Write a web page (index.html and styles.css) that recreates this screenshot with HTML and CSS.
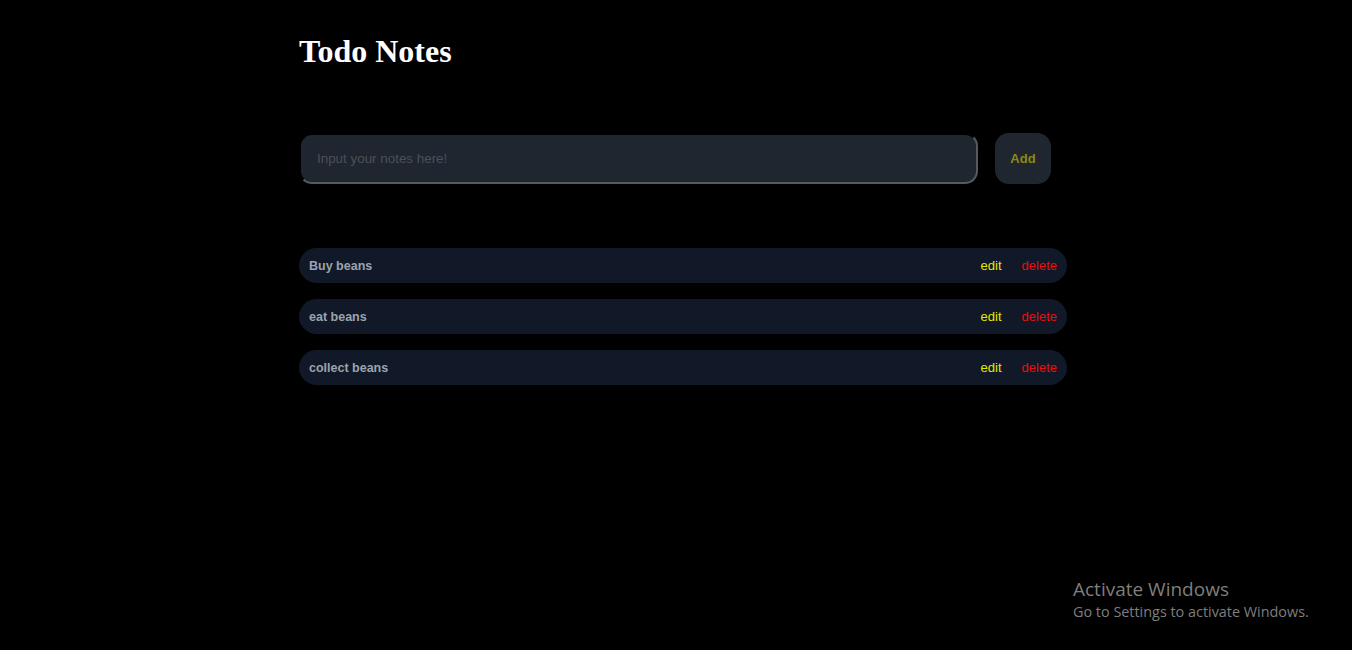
FILE: index.html
```html
<!DOCTYPE html>
<html>
<head>
<meta charset="utf-8">
<link rel="stylesheet" href="styles.css">
</head>
<body>
<div class="app">
  <h1 class="title">Todo Notes</h1>
  <form class="entry">
    <input class="entry-input" type="text" placeholder="Input your notes here!">
    <button class="entry-add" type="button">Add</button>
  </form>
  <ul class="notes">
    <li class="note"><span class="note-text">Buy beans</span><span class="note-actions"><span class="act-edit">edit</span><span class="act-delete">delete</span></span></li>
    <li class="note"><span class="note-text">eat beans</span><span class="note-actions"><span class="act-edit">edit</span><span class="act-delete">delete</span></span></li>
    <li class="note"><span class="note-text">collect beans</span><span class="note-actions"><span class="act-edit">edit</span><span class="act-delete">delete</span></span></li>
  </ul>
</div>
<div class="watermark">
  <div class="wm-title">Activate Windows</div>
  <div class="wm-sub">Go to Settings to activate Windows.</div>
</div>
</body>
</html>
```

FILE: styles.css
```css
html, body {
  margin: 0;
  padding: 0;
  background: #000;
  height: 100%;
}
body {
  font-family: "Liberation Sans", Arial, sans-serif;
}
.app {
  width: 768px;
  margin-left: 299px;
  padding-top: 33px;
}
.title {
  font-family: "Liberation Serif", "Times New Roman", serif;
  font-weight: bold;
  font-size: 32px;
  color: #fff;
  margin: 0;
  line-height: 37px;
}
.entry {
  display: flex;
  align-items: center;
  gap: 17px;
  margin-top: 63px;
}
.entry-input {
  width: 679px;
  height: 51px;
  box-sizing: border-box;
  background: #1f2630;
  border: 2px inset #555a60;
  border-top-color: #15181c;
  border-left-color: #15181c;
  border-radius: 13px;
  padding: 0 16px;
  font-family: "Liberation Sans", Arial, sans-serif;
  font-size: 13.4px;
  font-weight: normal;
  color: #ccc;
  outline: none;
}
.entry-input::placeholder {
  color: #4a5058;
}
.entry-add {
  width: 56px;
  height: 51px;
  background: #1f2630;
  border: none;
  border-radius: 14px;
  color: #8a8a0f;
  font-family: "Liberation Sans", Arial, sans-serif;
  font-size: 13px;
  font-weight: bold;
  padding: 0;
}
.notes {
  list-style: none;
  margin: 64px 0 0;
  padding: 0;
  display: flex;
  flex-direction: column;
  gap: 16px;
}
.note {
  height: 35px;
  background: #111827;
  border-radius: 18px;
  display: flex;
  align-items: center;
  justify-content: space-between;
  padding: 0 10px;
}
.note-text {
  color: #9ca3af;
  font-size: 12.5px;
  font-weight: bold;
}
.note-actions {
  display: flex;
  gap: 20px;
  font-size: 13px;
}
.act-edit {
  color: #e5e800;
}
.act-delete {
  color: #ee0c0c;
}
.watermark {
  position: absolute;
  left: 1073px;
  top: 577px;
  color: #7e7e7e;
  font-family: "Open Sans", "Noto Sans", sans-serif;
}
.wm-title {
  font-size: 19px;
  line-height: 24px;
}
.wm-sub {
  font-size: 14.4px;
  line-height: 21px;
}
```
